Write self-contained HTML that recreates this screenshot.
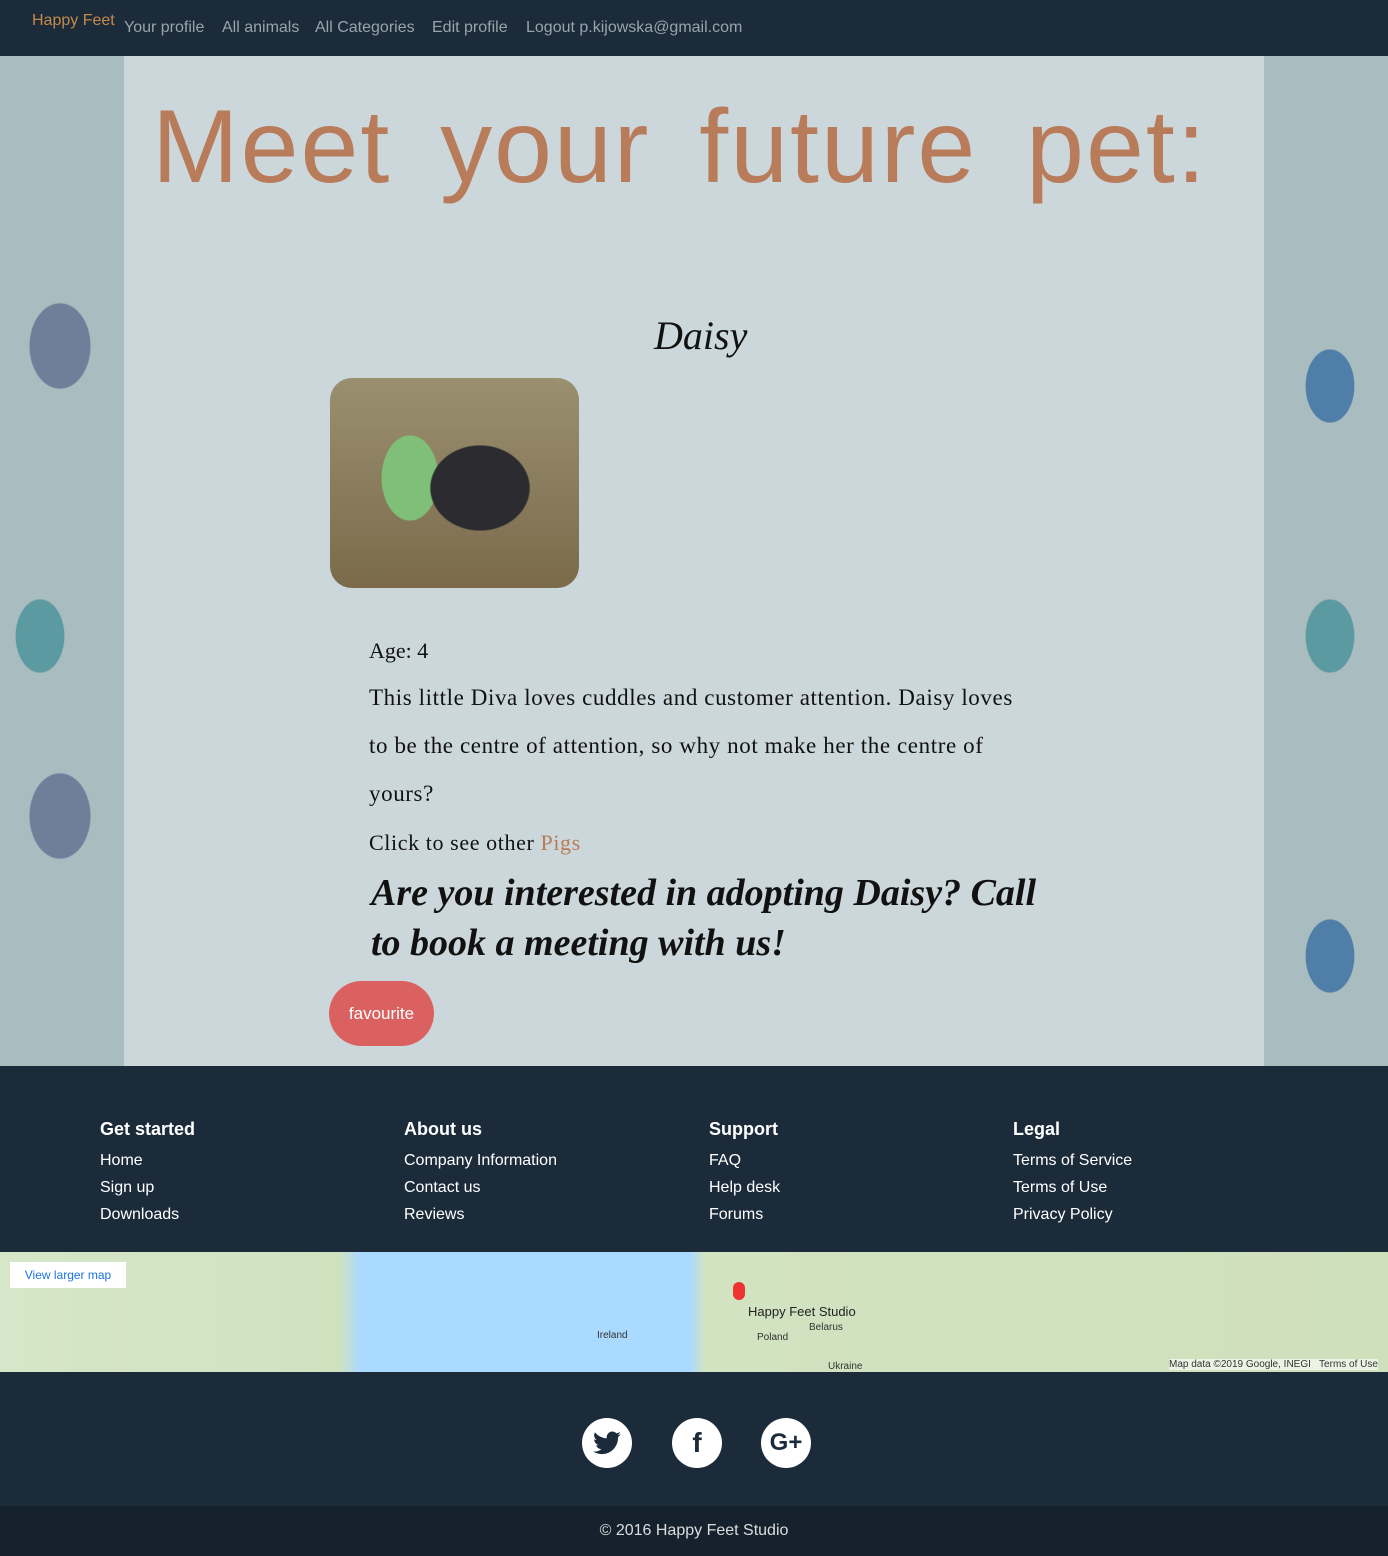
<!DOCTYPE html>
<html><head><style>
*{margin:0;padding:0;box-sizing:border-box}
body{width:1388px;height:1556px;font-family:"Liberation Sans",sans-serif;background:#1b2b3a;position:relative;overflow:hidden}
.nav{position:absolute;top:0;left:0;width:1388px;height:56px;background:#1b2b3a;font-size:16px;color:#9aa3ab}
.nav span{position:absolute;top:19px}
.bg{position:absolute;top:56px;left:0;width:1388px;height:1010px;background:
radial-gradient(ellipse 50px 70px at 60px 290px,#6f7f9a 60%,transparent 62%),
radial-gradient(ellipse 40px 60px at 40px 580px,#5b9aa0 60%,transparent 62%),
radial-gradient(ellipse 50px 70px at 60px 760px,#6f7f9a 60%,transparent 62%),
radial-gradient(ellipse 40px 60px at 1330px 330px,#4f7ea8 60%,transparent 62%),
radial-gradient(ellipse 40px 60px at 1330px 900px,#4f7ea8 60%,transparent 62%),
radial-gradient(ellipse 40px 60px at 1330px 580px,#5b9aa0 60%,transparent 62%),
#a9bcbf}
.panel{position:absolute;top:56px;left:124px;width:1140px;height:1010px;background:#ccd7db}
.h1{position:absolute;top:88px;left:152px;font-size:104px;color:#b97c5a;letter-spacing:2px;word-spacing:18px;font-family:"Liberation Sans",sans-serif;white-space:nowrap}
.name{position:absolute;top:312px;left:654px;font-size:40px;font-style:italic;font-family:"Liberation Serif",serif;color:#111}
.pic{position:absolute;top:378px;left:330px;width:249px;height:210px;border-radius:22px;background:radial-gradient(ellipse 70px 60px at 150px 110px,#2c2c30 70%,transparent 72%),radial-gradient(ellipse 40px 60px at 80px 100px,#7fbf77 70%,transparent 72%),linear-gradient(#9a9070,#7a6a4a)}
.txt{position:absolute;left:369px;font-size:22px;color:#111;font-family:"Liberation Serif",serif;white-space:nowrap}
.big{position:absolute;left:371px;top:868px;font-size:38px;line-height:50px;font-style:italic;font-weight:bold;font-family:"Liberation Serif",serif;width:680px;color:#111}
.fav{position:absolute;top:981px;left:329px;width:105px;height:65px;border-radius:33px;background:#db6160;color:#fff;font-size:17px;text-align:center;line-height:65px}
.foot{position:absolute;top:1066px;left:0;width:1388px;height:186px;background:#1b2b3a;color:#fff}
.col{position:absolute;top:50px;font-size:16px;line-height:27px}
.col b{display:block;font-size:18px;margin-bottom:4px}
.map{position:absolute;top:1252px;left:0;width:1388px;height:120px;background:linear-gradient(90deg,#d6e6c8 0,#cfe2c0 340px,#aadaff 360px,#aadaff 690px,#d2e3c2 705px,#cfe0bd 1388px);font-size:10px;color:#333}
.soc{position:absolute;top:1418px;width:50px;height:50px;border-radius:50%;background:#fff;color:#1b2b3a;font-weight:bold;font-size:28px;text-align:center;line-height:50px}
.copy{position:absolute;top:1506px;left:0;width:1388px;height:50px;background:#15222e;color:#ddd;font-size:16px;text-align:center;line-height:50px}
</style></head><body>
<div class="nav"><span style="left:32px;top:12px;color:#c48a4c">Happy Feet</span><span style="left:124px">Your profile</span><span style="left:222px">All animals</span><span style="left:315px">All Categories</span><span style="left:432px">Edit profile</span><span style="left:526px">Logout p.kijowska@gmail.com</span></div>
<div class="bg"></div>
<div class="panel"></div>
<div class="h1">Meet your future pet:</div>
<div class="name">Daisy</div>
<div class="pic"></div>
<div class="txt" style="top:638px">Age: 4</div>
<div class="txt" style="top:674px;line-height:48px;font-size:23px;letter-spacing:0.6px">This little Diva loves cuddles and customer attention. Daisy loves<br>to be the centre of attention, so why not make her the centre of<br>yours?</div>
<div class="txt" style="top:830px;letter-spacing:0.6px">Click to see other <span style="color:#b97c5a">Pigs</span></div>
<div class="big">Are you interested in adopting Daisy? Call to book a meeting with us!</div>
<div class="fav">favourite</div>
<div class="foot">
<div class="col" style="left:100px"><b>Get started</b>Home<br>Sign up<br>Downloads</div>
<div class="col" style="left:404px"><b>About us</b>Company Information<br>Contact us<br>Reviews</div>
<div class="col" style="left:709px"><b>Support</b>FAQ<br>Help desk<br>Forums</div>
<div class="col" style="left:1013px"><b>Legal</b>Terms of Service<br>Terms of Use<br>Privacy Policy</div>
</div>
<div class="map">
<div style="position:absolute;left:10px;top:10px;width:116px;height:26px;background:#fff;color:#1a73e8;font-size:12px;line-height:26px;text-align:center">View larger map</div>
<div style="position:absolute;left:733px;top:30px;width:12px;height:18px;background:#e33;border-radius:6px"></div>
<div style="position:absolute;left:748px;top:52px;font-size:13px;color:#222">Happy Feet Studio</div>
<div style="position:absolute;left:597px;top:78px">Ireland</div>
<div style="position:absolute;left:757px;top:80px">Poland</div>
<div style="position:absolute;left:809px;top:70px">Belarus</div>
<div style="position:absolute;left:828px;top:109px">Ukraine</div>
<div style="position:absolute;left:1169px;top:107px;background:rgba(255,255,255,.6)">Map data ©2019 Google, INEGI &nbsp; Terms of Use</div>
</div>
<div class="soc" style="left:582px"><svg width="28" height="24" viewBox="0 0 24 20" style="margin-top:13px"><path fill="#1b2b3a" d="M24 2.4a10 10 0 0 1-2.8.8A5 5 0 0 0 23.3.5a10 10 0 0 1-3.1 1.2A4.9 4.9 0 0 0 11.8 6 14 14 0 0 1 1.700.9a4.9 4.9 0 0 0 1.5 6.6A4.9 4.9 0 0 1 1 6.9a4.9 4.9 0 0 0 3.9 4.8 5 5 0 0 1-2.2.1 4.9 4.9 0 0 0 4.6 3.4A9.9 9.9 0 0 1 0 17.3 14 14 0 0 0 7.5 19.5c9.1 0 14-7.5 14-14v-.6A10 10 0 0 0 24 2.4z"/></svg></div>
<div class="soc" style="left:672px">f</div>
<div class="soc" style="left:761px;font-size:24px">G+</div>
<div class="copy">© 2016 Happy Feet Studio</div>
</body></html>
